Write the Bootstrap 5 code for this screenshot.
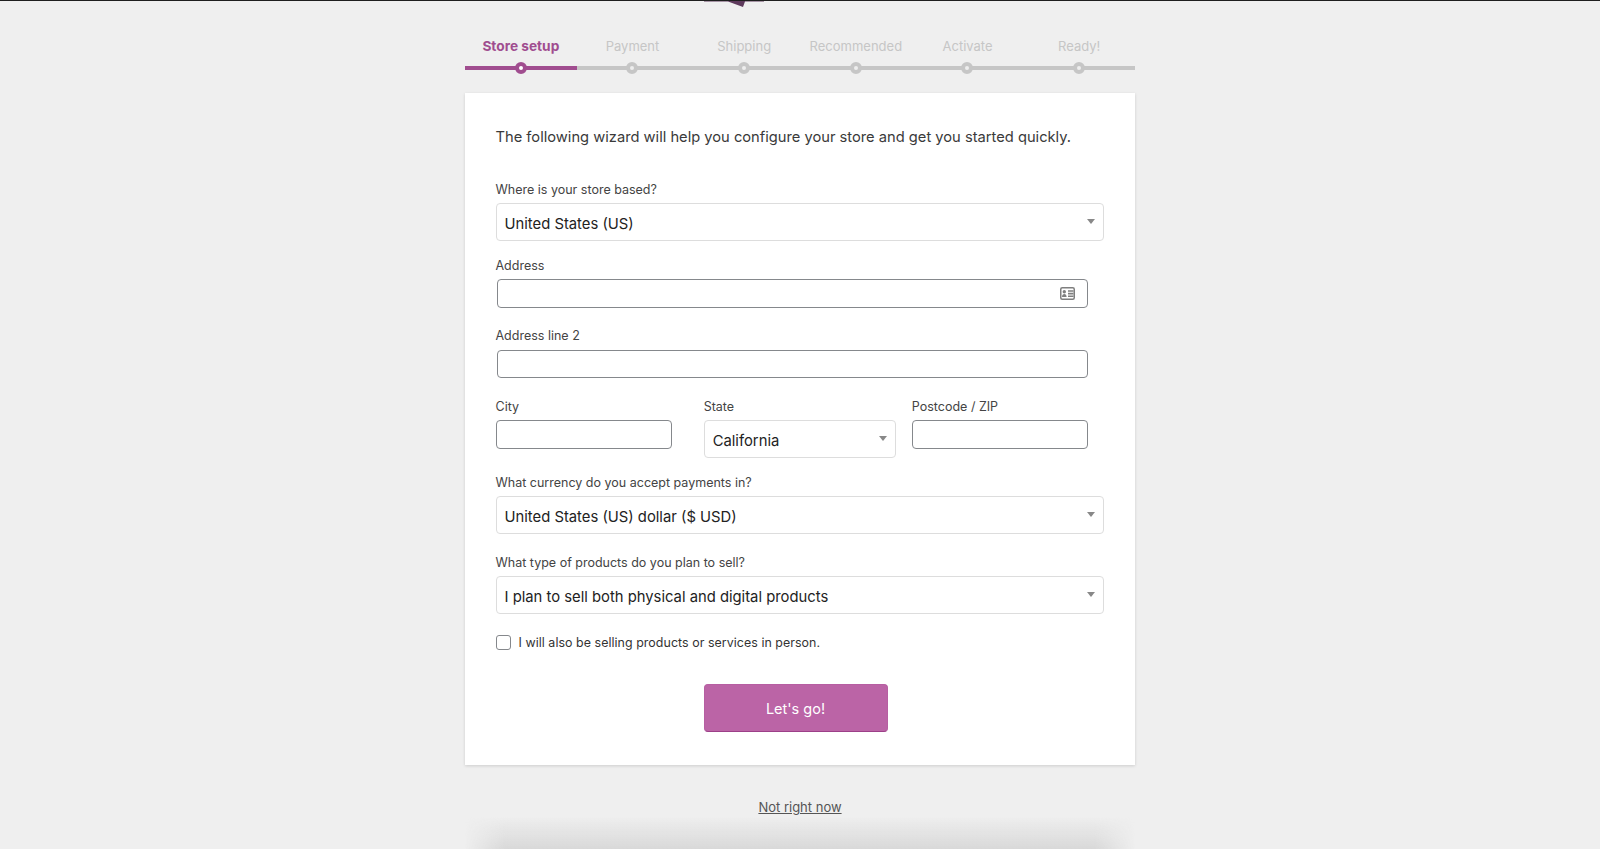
<!DOCTYPE html>
<html lang="en">
<head>
<meta charset="utf-8">
<title>Store setup</title>
<link href="https://cdn.jsdelivr.net/npm/bootstrap@5.3.0/dist/css/bootstrap.min.css" rel="stylesheet">
<style>
html,body{height:100%;overflow:hidden}
body{background:#efefef;font-family:Inter,"Liberation Sans",sans-serif;color:#333;border-top:1px solid #1e1e1e}
.wz-logo{height:35px;display:flex;justify-content:center}
.wz-logo svg{display:block;width:60px;height:7px;margin-right:132px;margin-top:-1px}
.wz-wrap{width:670px;margin:0 auto}
.wz-steps{display:flex;margin:0 0 23px;padding:0;list-style:none}
.wz-steps li{flex:1 1 0;text-align:center;font-size:13px;line-height:20px;padding-bottom:10px;color:#c6c6c6;border-bottom:4px solid #c6c6c6;position:relative}
.wz-steps li::before{content:"";position:absolute;left:50%;bottom:-8px;width:12px;height:12px;margin-left:-6.250px;border-radius:50%;border:4px solid #c6c6c6;background:#eee}
.wz-steps li.is-on{color:#a04d8f;font-weight:700;font-size:13.700px;border-color:#a04d8f}
.wz-steps li.is-on::before{border-color:#a04d8f;background:#fff}
.wz-card{background:#fff;border:0;border-radius:0;box-shadow:0 1px 3px rgba(0,0,0,.14);padding:32px 31px 33px 30.500px;height:672px}
.wz-intro{font-size:14.700px;line-height:24px;margin:0 0 32px;color:#3a3a3a}
.wz-lab{display:block;font-size:12.500px;line-height:18px;color:#444;margin:0}
.wz-sel.form-select{font-size:14.800px;line-height:20px;color:#222;height:38px;padding:9px 24px 5px 8px;border:1px solid #ddd;border-radius:4px;margin-top:4px;background-size:8px 5px;background-position:right 8px top 15px;background-image:url("data:image/svg+xml,%3Csvg xmlns='http://www.w3.org/2000/svg' viewBox='0 0 8 5'%3E%3Cpath fill='%23888' d='M0 0h8L4 5z'/%3E%3C/svg%3E")}
.wz-inp.form-control{height:28.500px;width:591px;margin:4.500px 0 0 1px;padding:0 8px;border:1px solid #85888c;border-radius:4px;box-shadow:none}
.wz-block{height:70.800px;position:relative}
.wz-ico{position:absolute;left:564px;top:30px;width:15px;height:13px}
.wz-city .wz-inp.form-control{width:calc(100% - 16.100px);margin-left:.6px}
.wz-gap1{margin-top:16px}
.wz-gap2{margin-top:16.500px}
.wz-gap3{margin-top:20px}
.wz-check{display:flex;align-items:center;gap:8px;margin:20.500px 0 0;padding:0;min-height:0}
.wz-check .form-check-input{float:none;margin:0;width:15px;height:15px;border:1px solid #85888c;border-radius:3px}
.wz-check label{font-size:12.400px;line-height:15px;color:#333;letter-spacing:.06px}
.wz-act{display:flex;justify-content:center;padding-right:8.500px;margin-top:34.500px}
.wz-btn.btn{width:184px;height:48px;background:#bb64a6;border:1px solid #b75fa2;border-bottom-color:#9c3f88;border-radius:4px;color:#fff;font-size:14.500px;padding:2px 0 0}
.wz-skip{text-align:center;margin:32px 0 0;font-size:13px;line-height:20px}
.wz-skip a{color:#555;text-decoration:underline}
.wz-glow{width:670px;height:32px;margin:0 auto;background:linear-gradient(to bottom,rgba(216,216,216,0),#d8d8d8);-webkit-mask-image:linear-gradient(to right,transparent,#000 40px,#000 630px,transparent);mask-image:linear-gradient(to right,transparent,#000 40px,#000 630px,transparent)}
</style>
</head>
<body>
<div class="wz-logo">
<svg viewBox="0 0 60 7" aria-hidden="true"><path fill="#5e3a5c" d="M0 0h60v1.500H41L39 7 24 1.500H0z"/></svg>
</div>
<main class="wz-wrap">
<ol class="wz-steps">
<li class="is-on">Store setup</li>
<li>Payment</li>
<li>Shipping</li>
<li>Recommended</li>
<li>Activate</li>
<li>Ready!</li>
</ol>
<form class="wz-card card">
<p class="wz-intro">The following wizard will help you configure your store and get you started quickly.</p>
<label class="wz-lab" for="c1">Where is your store based?</label>
<select id="c1" class="wz-sel form-select"><option>United States (US)</option></select>
<div class="wz-block wz-gap1">
<label class="wz-lab" for="a1">Address</label>
<input id="a1" class="wz-inp form-control" type="text">
<svg class="wz-ico" viewBox="0 0 15 13" aria-hidden="true"><rect x=".75" y=".75" width="13.500" height="11.500" rx="1.500" fill="none" stroke="#7f7f7f" stroke-width="1.500"/><circle cx="4.300" cy="4.800" r="1.700" fill="#7f7f7f"/><path fill="#7f7f7f" d="M2 10c0-2 1-3 2.300-3s2.300 1 2.300 3zM8 3.200h5.500v1.600H8zM8 5.800h5.500v1.600H8zM8 8.400h5.500v1.600H8z"/></svg>
</div>
<div class="wz-block">
<label class="wz-lab" for="a2">Address line 2</label>
<input id="a2" class="wz-inp form-control" type="text">
</div>
<div class="row gx-3 wz-city">
<div class="col-4"><label class="wz-lab" for="a3">City</label><input id="a3" class="wz-inp form-control" type="text"></div>
<div class="col-4"><label class="wz-lab" for="a4">State</label><select id="a4" class="wz-sel form-select"><option>California</option></select></div>
<div class="col-4"><label class="wz-lab" for="a5">Postcode / ZIP</label><input id="a5" class="wz-inp form-control" type="text"></div>
</div>
<label class="wz-lab wz-gap2" for="c2">What currency do you accept payments in?</label>
<select id="c2" class="wz-sel form-select"><option>United States (US) dollar ($ USD)</option></select>
<label class="wz-lab wz-gap3" for="c3">What type of products do you plan to sell?</label>
<select id="c3" class="wz-sel form-select"><option>I plan to sell both physical and digital products</option></select>
<div class="wz-check form-check"><input id="c4" class="form-check-input" type="checkbox"><label for="c4">I will also be selling products or services in person.</label></div>
<div class="wz-act"><button type="button" class="wz-btn btn">Let's go!</button></div>
</form>
<p class="wz-skip"><a href="#">Not right now</a></p>
<div class="wz-glow"></div>
</main>
<script src="https://cdn.jsdelivr.net/npm/bootstrap@5.3.0/dist/js/bootstrap.bundle.min.js"></script>
</body>
</html>
